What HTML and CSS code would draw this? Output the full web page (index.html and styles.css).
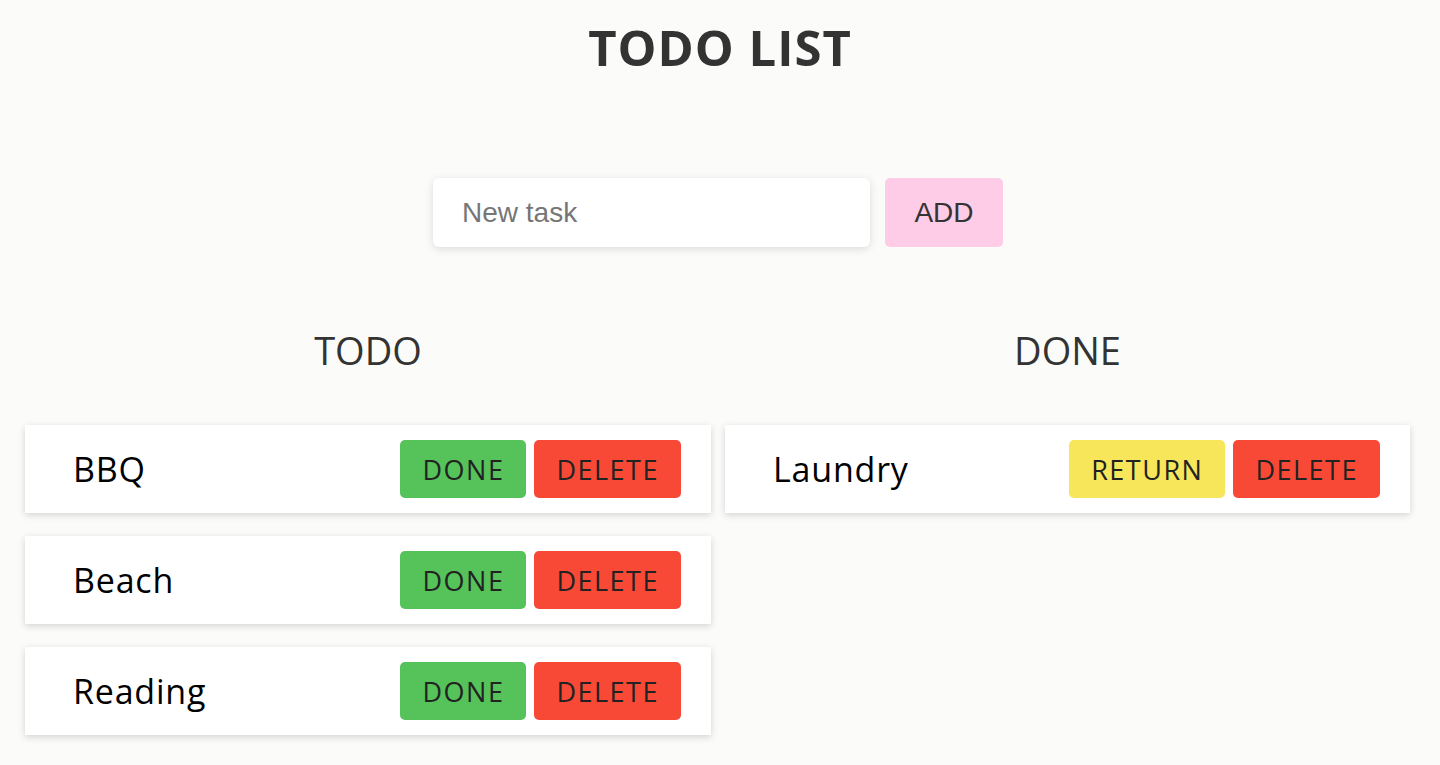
FILE: index.html
```html
<!DOCTYPE html>
<html lang="en">
<head>
<meta charset="utf-8">
<title>Todo List</title>
<link rel="stylesheet" href="styles.css">
</head>
<body>
<h1 class="title">TODO LIST</h1>
<form class="add-form">
  <input class="task-input" type="text" placeholder="New task">
  <button class="add-btn" type="button">ADD</button>
</form>
<main class="board">
  <section class="column">
    <h2 class="column-title">TODO</h2>
    <ul class="task-list">
      <li class="task">
        <span class="task-name">BBQ</span>
        <div class="actions">
          <button class="btn btn-done" type="button">DONE</button>
          <button class="btn btn-delete" type="button">DELETE</button>
        </div>
      </li>
      <li class="task">
        <span class="task-name">Beach</span>
        <div class="actions">
          <button class="btn btn-done" type="button">DONE</button>
          <button class="btn btn-delete" type="button">DELETE</button>
        </div>
      </li>
      <li class="task">
        <span class="task-name">Reading</span>
        <div class="actions">
          <button class="btn btn-done" type="button">DONE</button>
          <button class="btn btn-delete" type="button">DELETE</button>
        </div>
      </li>
    </ul>
  </section>
  <section class="column">
    <h2 class="column-title">DONE</h2>
    <ul class="task-list">
      <li class="task">
        <span class="task-name">Laundry</span>
        <div class="actions">
          <button class="btn btn-return" type="button">RETURN</button>
          <button class="btn btn-delete" type="button">DELETE</button>
        </div>
      </li>
    </ul>
  </section>
</main>
</body>
</html>
```

FILE: styles.css
```css
* {
  box-sizing: border-box;
}

body {
  margin: 0;
  background: #fbfbf9;
  font-family: "Open Sans", "DejaVu Sans", sans-serif;
  color: #333;
}

.title {
  margin: 0;
  padding-top: 23px;
  font-size: 49px;
  line-height: 48px;
  font-weight: 700;
  letter-spacing: 1px;
  text-align: center;
  color: #333;
}

.add-form {
  display: flex;
  justify-content: center;
  gap: 15px;
  margin: 107px 0 0 -4px;
}

.task-input {
  width: 437px;
  height: 69px;
  border: none;
  border-radius: 6px;
  background: #fff;
  box-shadow: 0 2px 8px rgba(0, 0, 0, 0.13);
  padding: 0 0 0 29px;
  font-family: "Liberation Sans", Arial, sans-serif;
  font-size: 28px;
  color: #333;
  outline: none;
}

.task-input::placeholder {
  color: #767676;
}

.add-btn {
  width: 118px;
  height: 69px;
  border: none;
  border-radius: 5px;
  background: #ffcce8;
  font-family: "Liberation Sans", Arial, sans-serif;
  font-size: 28px;
  color: #333;
  padding: 0;
}

.board {
  display: grid;
  grid-template-columns: 686px 685px;
  column-gap: 14px;
  padding: 0 0 40px 25px;
  margin-top: 84px;
}

.column-title {
  margin: 0;
  font-size: 38px;
  line-height: 38px;
  font-weight: 400;
  text-align: center;
  color: #333;
}

.task-list {
  list-style: none;
  margin: 56px 0 0;
  padding: 0;
  display: flex;
  flex-direction: column;
  gap: 23px;
}

.task {
  display: flex;
  align-items: center;
  justify-content: space-between;
  height: 88px;
  padding: 0 30px 0 48px;
  background: #fff;
  box-shadow: 0 2px 7px rgba(0, 0, 0, 0.16);
}

.task-name {
  font-size: 34px;
  letter-spacing: 0.8px;
  color: #000;
}

.actions {
  display: flex;
  gap: 8px;
}

.btn {
  height: 58px;
  padding: 0 22px;
  border: none;
  border-radius: 5px;
  font-family: "Open Sans", "DejaVu Sans", sans-serif;
  font-size: 27px;
  letter-spacing: 1.5px;
  color: #222;
}

.btn-done {
  background: #55c35a;
}

.btn-delete {
  background: #f84936;
}

.btn-return {
  background: #f7e65a;
}
```
